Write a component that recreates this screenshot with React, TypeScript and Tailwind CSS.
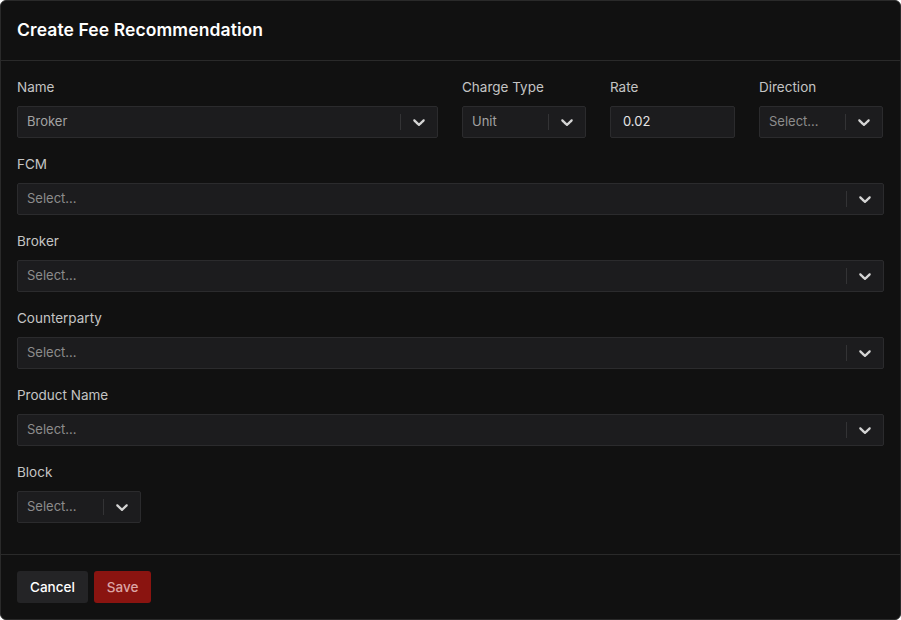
import React from "react";

function Chevron() {
  return (
    <svg className="h-5 w-5 text-[#d4d4d4]" viewBox="0 0 20 20" fill="currentColor">
      <path d="M4.516 7.548c.436-.446 1.043-.481 1.576 0L10 11.295l3.908-3.747c.533-.481 1.141-.446 1.574 0 .436.445.408 1.197 0 1.615-.406.418-4.695 4.502-4.695 4.502a1.095 1.095 0 0 1-1.576 0S4.924 9.581 4.516 9.163c-.409-.418-.436-1.17 0-1.615z" />
    </svg>
  );
}

function Select({ value, placeholder = "Select...", className = "" }: { value?: string; placeholder?: string; className?: string }) {
  return (
    <div className={`flex h-8 items-center rounded-[2px] border border-[#2b2b2d] bg-[#1c1c1e] ${className}`}>
      <div className={`flex-1 truncate pl-[9px] text-[13px] ${value ? "text-[#a3a3a3]" : "text-[#8c8c8c]"}`}>
        {value ?? placeholder}
      </div>
      <span className="my-2 h-4 w-px self-center bg-[#333335]"></span>
      <div className="flex items-center px-2">
        <Chevron />
      </div>
    </div>
  );
}

function Label({ children }: { children: React.ReactNode }) {
  return <div className="mb-[9px] h-5 text-[13.5px] leading-5 text-[#c4c4c4]">{children}</div>;
}

const fullFields = ["FCM", "Broker", "Counterparty", "Product Name"];

export default function App() {
  return (
    <div
      className="flex h-[620px] w-[901px] flex-col overflow-hidden rounded-md border border-[#2a2a2a] bg-[#111111]"
      style={{ fontFamily: "Inter, 'Noto Sans', sans-serif" }}
    >
      <div className="flex h-[60px] shrink-0 items-center border-b border-[#2a2a2a] px-4">
        <h1 className="text-[17.5px] font-semibold tracking-[0.1px] text-white">Create Fee Recommendation</h1>
      </div>

      <div className="flex-1 px-4 pt-4">
        <div className="flex gap-6">
          <div className="w-[421px]">
            <Label>Name</Label>
            <Select value="Broker" />
          </div>
          <div className="w-[124px]">
            <Label>Charge Type</Label>
            <Select value="Unit" />
          </div>
          <div className="w-[125px]">
            <Label>Rate</Label>
            <div className="flex h-8 items-center rounded-[2px] border border-[#2b2b2d] bg-[#1c1c1e] pl-[12px] text-[13px] text-[#e5e5e5]">
              0.02
            </div>
          </div>
          <div className="w-[124px]">
            <Label>Direction</Label>
            <Select />
          </div>
        </div>

        {fullFields.map((f) => (
          <div key={f} className="mt-4">
            <Label>{f}</Label>
            <Select />
          </div>
        ))}

        <div className="mt-4">
          <Label>Block</Label>
          <Select className="w-[124px]" />
        </div>
      </div>

      <div className="flex h-[65px] shrink-0 items-start gap-[6px] border-t border-[#2a2a2a] px-4 pt-4">
        <button className="h-8 rounded-[3px] bg-[#242426] px-[13px] text-[13.5px] font-medium text-white">Cancel</button>
        <button className="h-8 rounded-[3px] bg-[#8a1410] px-[13px] text-[13.5px] font-medium text-[#dca5a5]">Save</button>
      </div>
    </div>
  );
}
